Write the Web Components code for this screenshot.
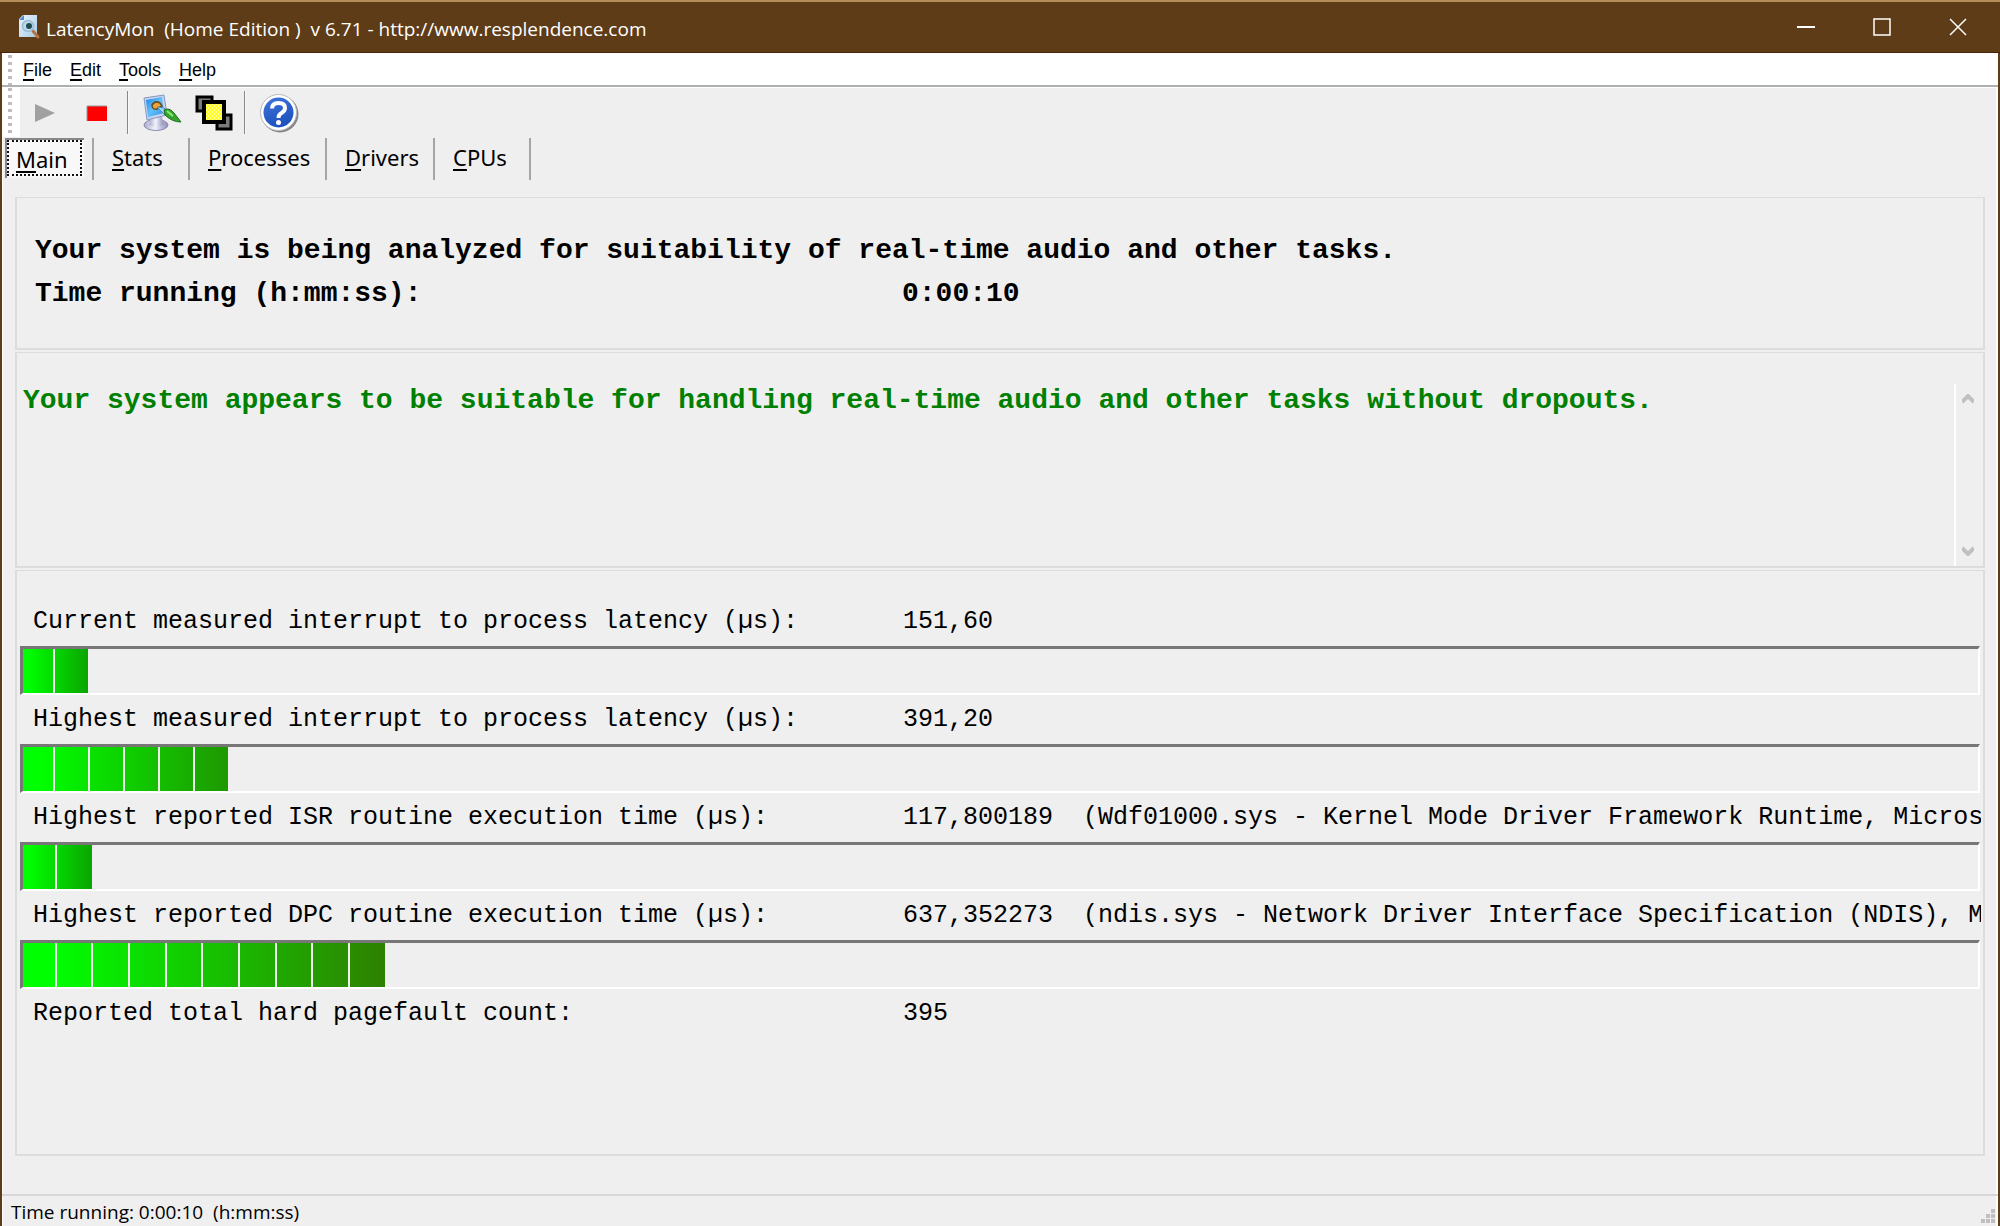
<!DOCTYPE html>
<html lang="en">
<head>
<meta charset="utf-8">
<title>LatencyMon</title>
<style>
body { margin: 0; background: #efefef; }
</style>
</head>
<body>
<latency-window>
  <title-bar slot="title">LatencyMon&nbsp; (Home Edition )&nbsp; v 6.71 - http://www.resplendence.com</title-bar>
  <menu-bar slot="menu"></menu-bar>
  <tool-bar slot="tools"></tool-bar>
  <tab-bar slot="tabs"></tab-bar>
  <group-panel class="summary">
    <summary-lines></summary-lines>
  </group-panel>
  <group-panel class="verdict">
    <scroll-note>Your system appears to be suitable for handling real-time audio and other tasks without dropouts.</scroll-note>
  </group-panel>
  <group-panel class="measures">
    <latency-meter name="Current measured interrupt to process latency (µs):" value="151,60" level="3.33" cells="2" end="#0aa500"></latency-meter>
    <latency-meter name="Highest measured interrupt to process latency (µs):" value="391,20" level="10.5" cells="6" end="#1f9800"></latency-meter>
    <latency-meter name="Highest reported ISR routine execution time (µs):" value="117,800189" level="3.55" cells="2" end="#0aa500" detail="(Wdf01000.sys - Kernel Mode Driver Framework Runtime, Micros"></latency-meter>
    <latency-meter name="Highest reported DPC routine execution time (µs):" value="637,352273" level="18.5" cells="10" end="#2e8000" detail="(ndis.sys - Network Driver Interface Specification (NDIS), M"></latency-meter>
    <latency-meter name="Reported total hard pagefault count:" value="395"></latency-meter>
  </group-panel>
  <status-bar slot="status">Time running: 0:00:10&nbsp; (h:mm:ss)</status-bar>
</latency-window>

<script>
const define = (name, html) => customElements.define(name, class extends HTMLElement {
  constructor() {
    super();
    this.attachShadow({ mode: 'open' }).innerHTML = html;
  }
});

define('latency-window', `
<style>
  :host { display: flex; flex-direction: column; min-height: 100vh; box-sizing: border-box; background: #efefef;
    border: solid #5e3c17; border-width: 0 2px; box-shadow: inset 1px 0 #fff, inset -2px 0 #fff; color: #000; }
  main { flex: 1; display: flex; flex-direction: column; gap: 1px; padding: 17px 13px 37px; }
  ::slotted(.summary) { height: 153px; }
  ::slotted(.verdict) { height: 216px; }
  ::slotted(.measures) { flex: 1; }
</style>
<slot name="title"></slot><slot name="menu"></slot><slot name="tools"></slot><slot name="tabs"></slot>
<main><slot></slot></main>
<slot name="status"></slot>`);

define('title-bar', `
<style>
  :host { display: flex; align-items: center; height: 53px; box-sizing: border-box; margin: 0 -2px; padding: 0 4px 0 18px;
    background: #5e3c17; border-top: 2px solid #b58d58; border-bottom: 1px solid #4a2505;
    color: #fff; font: 19px/28px "Open Sans", "Noto Sans", sans-serif; }
  .logo { width: 24px; height: 26px; margin-right: 4px; }
  h1 { flex: 1; margin: 0; padding-top: 4px; font: inherit; }
  button { width: 76px; height: 50px; padding: 0; border: 0; background: none; display: grid; place-items: center; }
</style>
<svg class="logo" viewBox="0 0 24 26">
  <defs><linearGradient id="pg" x2="1" y2="1"><stop stop-color="#e9f5ff"/><stop offset="1" stop-color="#a9cbe8"/></linearGradient></defs>
  <path d="M5 1H19V23H1V5Z" fill="url(#pg)"/><path d="M1 6 6 1V6Z" fill="#4a8fd8"/>
  <path d="M15 17 20 23" stroke="#b5713e" stroke-width="3" stroke-linecap="round"/>
  <circle cx="10" cy="12" r="5.500" fill="#b8dcec" stroke="#9dbbd4" stroke-width="1.500"/>
  <circle cx="11" cy="12" r="3" fill="#204c50"/>
</svg>
<h1><slot></slot></h1>
<button aria-label="Minimize"><svg width="18" height="18" stroke="#fff" stroke-width="2"><path d="M0 9H18"/></svg></button>
<button aria-label="Maximize"><svg width="18" height="18" fill="none" stroke="#fff" stroke-width="1.5"><path d="M1 1H17V17H1Z"/></svg></button>
<button aria-label="Close"><svg width="18" height="18" stroke="#fff" stroke-width="1.5"><path d="M1 1 17 17M17 1 1 17"/></svg></button>`);

const grip = `
  .grip { width: 4px; background: repeating-linear-gradient(#bdbdbd 0 3px, transparent 3px 7px); }`;

define('menu-bar', `
<style>
  :host { display: flex; height: 34px; box-sizing: border-box; padding-left: 6px; background: #fff;
    border-bottom: 2px solid #adb1ae; }
  ${grip}
  .grip { margin: 2px 11px 0 0; }
  nav { display: flex; align-items: center; gap: 18px; padding-top: 1px; }
  button { padding: 0; border: 0; background: none; color: #000; font: 18px/24px "Liberation Sans Narrow", "Liberation Sans", sans-serif; }
  u { text-decoration-thickness: 2px; text-underline-offset: 3px; }
</style>
<div class="grip"></div>
<nav><button><u>F</u>ile</button><button><u>E</u>dit</button><button><u>T</u>ools</button><button><u>H</u>elp</button></nav>`);

define('tool-bar', `
<style>
  :host { display: flex; height: 51px; align-items: center; gap: 2px; border-top: 1px solid #fff; padding-bottom: 1px; box-sizing: border-box; }
  ${grip}
  .handle { width: 18px; margin-right: -2px; align-self: stretch; box-sizing: border-box; padding-left: 6px; background: #fff; display: flex; }
  button { width: 50px; height: 44px; padding: 0; border: 0; background: none; display: grid; place-items: center; }
  hr { width: 1px; height: 43px; margin: 0 6px 0 3px; border: 0; background: #888; border-right: 1px solid #f8f8f8; }
</style>
<div class="handle"><div class="grip"></div></div>
<button aria-label="Start monitor" disabled><svg width="20" height="20"><path d="M0 1 20 10 0 19Z" fill="#a0a0a0"/></svg></button>
<button aria-label="Stop monitor"><svg width="22" height="18"><path d="M1 2H21V17H1Z" fill="#f00"/><path d="M1 17V2H21" fill="none" stroke="#999"/></svg></button>
<hr>
<button aria-label="Options"><svg width="40" height="38" viewBox="0 0 40 38">
  <defs><linearGradient id="s" x2="1" y2="1"><stop stop-color="#1b86e8"/><stop offset=".5" stop-color="#62c0fa"/><stop offset="1" stop-color="#2d90ea"/></linearGradient>
  <linearGradient id="b" x2="1"><stop stop-color="#aaaacb"/><stop offset=".45" stop-color="#f4f4fd"/><stop offset="1" stop-color="#8c8cb8"/></linearGradient></defs>
  <ellipse cx="14" cy="31" rx="12" ry="5.500" fill="url(#b)" stroke="#8d8db4"/>
  <path d="M9 23H20L22 31Q14 35 7 31Z" fill="url(#b)"/>
  <path d="M2 4 22 1 25 21 5 26Z" fill="#c6d4ee" stroke="#8598c4"/>
  <path d="M4 6 20 3 22 19 6 23Z" fill="url(#s)"/>
  <path d="M10 11Q13 6 18 9L20 12 15 15Q10 16 10 11Z" fill="#eda53a" stroke="#664b25" stroke-width="1.500"/>
  <path d="M15 13 22 14 26 18 23 21Z" fill="#95dcff" stroke="#5488b4"/>
  <path d="M22 16Q27 13 32 19L39 28Q30 28 23 21Z" fill="#35a62d" stroke="#1c6d1b"/>
  <path d="M25 17 31 22" stroke="#8bea70" stroke-width="2"/>
</svg></button>
<button aria-label="Windows"><svg width="38" height="36" viewBox="0 0 38 36" stroke="#000">
  <defs><pattern id="y" width="4" height="4" patternUnits="userSpaceOnUse"><path d="M0 0H4V4H0Z" fill="#ff0" stroke="none"/><path d="M0 0H2V2H0ZM2 2H4V4H2Z" fill="#ffff9c" stroke="none"/></pattern></defs>
  <path d="M2 2H17V16H2Z" fill="#7c7c7c" stroke-width="3"/><path d="M22 20H36V34H22Z" fill="#7c7c7c" stroke-width="3"/>
  <path d="M9 7H29V27H9Z" fill="url(#y)" stroke-width="4"/>
</svg></button>
<hr>
<button aria-label="Help"><svg width="40" height="40" viewBox="0 0 40 40">
  <defs><linearGradient id="h" y2="1" x2=".4"><stop stop-color="#3f75dc"/><stop offset="1" stop-color="#1e52bd"/></linearGradient></defs>
  <circle cx="21" cy="21" r="18.500" fill="#858585"/><circle cx="19.500" cy="19.500" r="18" fill="#fff" stroke="#b9b9bc"/>
  <circle cx="19.500" cy="19.500" r="15" fill="url(#h)"/>
  <path d="M13 15.500Q13 10 19.500 10Q26 10 26 15Q26 18 22.500 20Q19.500 21.500 19.500 25" fill="none" stroke="#fff" stroke-width="4"/><circle cx="19.500" cy="29.500" r="2.500" fill="#fff"/>
</svg></button>`);

define('tab-bar', `
<style>
  :host { display: block; }
  nav { display: flex; height: 42px; padding-left: 3px; }
  button { width: var(--w); box-sizing: border-box; padding: 0 0 5px 18px; border: 0; border-right: 2px solid #a5a5a5; background: none;
    color: #000; text-align: left; font: 22px/30px "Noto Sans", "Open Sans", sans-serif; }
  button[aria-selected] { width: 79px; height: 40px; margin-right: 8px; padding: 0 0 0 9px; border: 1px solid #888; border-width: 2px 0 0 2px; background: #f8f8f8; outline: 2px dotted #111; outline-offset: -4px; }
  i { width: 2px; background: #a5a5a5; }
  u { text-decoration-thickness: 2px; text-underline-offset: 3px; text-decoration-skip-ink: none; }
</style>
<nav role="tablist">
  <button role="tab" aria-selected="true"><u>M</u>ain</button><i></i>
  <button role="tab" style="--w:96px"><u>S</u>tats</button>
  <button role="tab" style="--w:137px"><u>P</u>rocesses</button>
  <button role="tab" style="--w:108px"><u>D</u>rivers</button>
  <button role="tab" style="--w:96px"><u>C</u>PUs</button>
</nav>`);

define('group-panel', `
<style>
  :host { display: block; box-sizing: border-box; border: 2px solid #dcdcdc; border-top-width: 1px; overflow: hidden; margin-bottom: 1px; }
</style>
<slot></slot>`);

define('summary-lines', `
<style>
  :host { display: block; padding: 31px 18px; font: bold 28px/43px "Liberation Mono", monospace; }
  p { margin: 0; }
  .row { display: grid; grid-template-columns: 867px 1fr; }
</style>
<p>Your system is being analyzed for suitability of real-time audio and other tasks.</p>
<div class="row"><span>Time running (h:mm:ss):</span><span>0:00:10</span></div>`);

define('scroll-note', `
<style>
  :host { display: flex; height: 182px; padding-top: 31px; color: #008000; font: bold 28px/34px "Liberation Mono", monospace; }
  p { flex: 1; margin: 0; padding-left: 6px; }
  .bar { width: 27px; border-left: 2px solid #fff; display: flex; flex-direction: column; justify-content: space-between; }
  button { height: 30px; width: 24px; padding: 0; border: 0; background: none; display: grid; place-items: center; }
</style>
<p><slot></slot></p>
<div class="bar">
  <button aria-label="Scroll up"><svg width="12" height="10"><path d="M0 8 6 2 12 8" fill="none" stroke="#c0c0c0" stroke-width="4"/></svg></button>
  <button aria-label="Scroll down"><svg width="12" height="10"><path d="M0 2 6 8 12 2" fill="none" stroke="#c0c0c0" stroke-width="4"/></svg></button>
</div>`);

customElements.define('latency-meter', class extends HTMLElement {
  connectedCallback() {
    const get = key => this.getAttribute(key) || '';
    const cells = Number(get('cells'));
    const detail = get('detail');
    this.attachShadow({ mode: 'open' }).innerHTML = `
<style>
  :host { display: block; padding: 0 3px; font: 25px/33px "Liberation Mono", monospace; }
  :host(:first-child) { padding-top: 26px; }
  .row { display: grid; grid-template-columns: 870px 1fr; height: 49px; box-sizing: border-box; padding: 8px 0 0 13px; margin-right: -1px; }
  .row > span { white-space: pre; overflow: hidden; }
  .track { height: 49px; box-sizing: border-box; border: solid; border-width: 3px 2px 2px 3px; border-color: #777 #fff #fff #777; }
  .fill { display: flex; gap: 2px; height: 44px; overflow: hidden; width: ${get('level')}%; background: linear-gradient(90deg, #0f0 8%, ${get('end')}); }
  .fill i { flex: 1; box-shadow: 2px 0 #efefef; }
  .fill i:first-child { margin-left: -3px; }
</style>
<div class="row"><span>${get('name')}</span><span>${get('value')}${detail ? '  ' + detail : ''}</span></div>
${cells ? `<div class="track" role="meter" aria-label="${get('name')}" aria-valuenow="${get('level')}"><div class="fill">${'<i></i>'.repeat(cells)}</div></div>` : ''}`;
  }
});

define('status-bar', `
<style>
  :host { display: flex; align-items: flex-end; justify-content: space-between; height: 32px; box-sizing: border-box; padding: 0 3px 0 9px;
    border-top: 2px solid #d7d7d7; font: 19px/28px "Open Sans", "Noto Sans", sans-serif; }
  svg { margin-bottom: 3px; }
</style>
<span><slot></slot></span>
<svg width="14" height="14" fill="#bfbfbf"><path d="M10 0h4v4h-4zM5 5h4v4h-4zM10 5h4v4h-4zM0 10h4v4h-4zM5 10h4v4h-4zM10 10h4v4h-4z"/></svg>`);
</script>
</body>
</html>
